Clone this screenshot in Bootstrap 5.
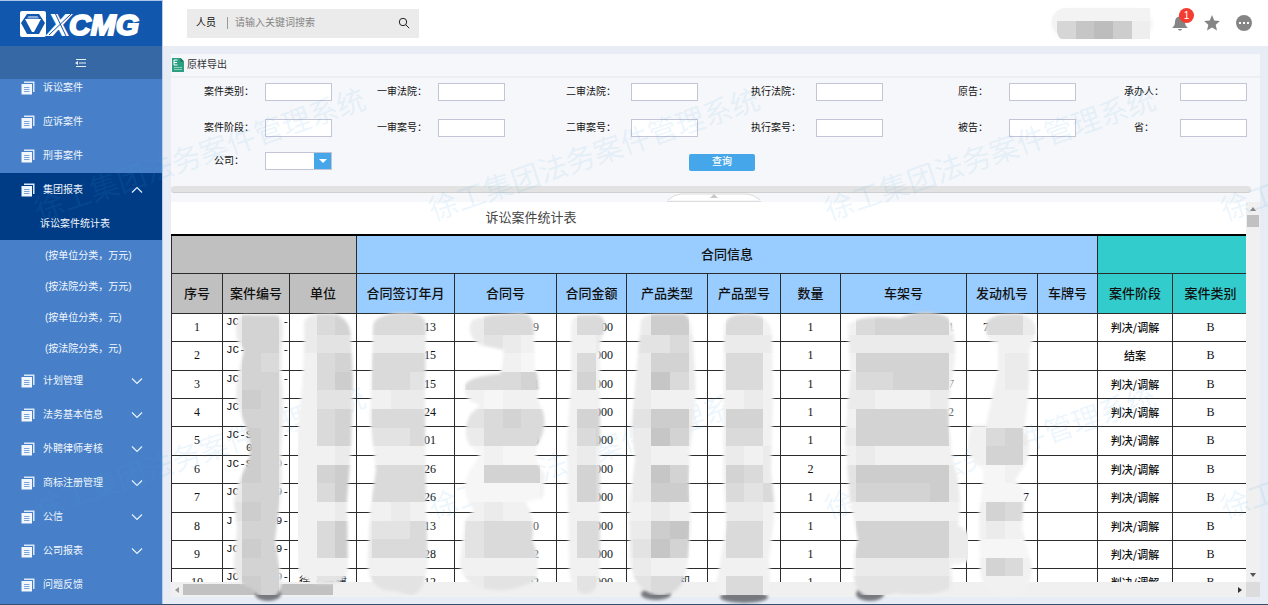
<!DOCTYPE html>
<html lang="zh-CN">
<head>
<meta charset="utf-8">
<meta name="viewport" content="width=device-width, initial-scale=1">
<title>法务案件管理系统</title>
<link href="https://cdn.jsdelivr.net/npm/bootstrap@5.3.0/dist/css/bootstrap.min.css" rel="stylesheet">
<style>
body{font-family:"Liberation Sans","Noto Sans CJK SC",sans-serif;font-size:10px;line-height:16px;color:#111;background:#e7ecf5}
.app{height:100vh;border-bottom:1px solid #33506e}
.side{width:162px;background:#4780c8;border-top:1px solid #a9c5e8}
.side a{color:#f2f7fd;text-decoration:none}
.logo{height:45px;background:#1257ae;padding-left:19px}
.fold{height:33px;background:#3568a5;border:0;padding:0}
.menu-list{margin-top:-8px}
.item{height:34px;padding:0 19px 0 21px}
.item svg:first-child{margin-right:8px}
.opened{background:#003c85}
.sub{height:31px;padding-left:45px}
.sub-on{height:33px;padding-left:40px;background:#003c85}
.content{border-left:1px solid #b7cdea}
.top{height:46px;background:#fff;padding:0 16px 0 24px}
.search{width:232px;height:29px;background:#ebebeb;padding:0 9px}
.search input{border:0;background:none;outline:0;padding:0;color:#777;min-width:0}
.search input::placeholder{color:#858585}
.search .bar{width:1px;height:12px;background:#999;margin:0 7px 0 11px}
.icon-btn{border:0;background:none;padding:0;line-height:0}
.num{width:15px;height:15px;left:7px;top:-7px;background:#f43c30;color:#fff;border-radius:50%;font-size:10px;line-height:15px;text-align:center}
.panel{background:#f6f7fa;margin:8px 8px 7px 8px;min-height:0}
.export{height:24px;border:0;border-bottom:2px solid #eceef1;background:none;padding:0 1px;color:#333}
.export span{margin-left:3px}
.query{display:grid;grid-template-columns:161fr 173fr 193fr 185fr 193fr 171fr;grid-template-rows:28px 44px 22px;padding:0 13px 14px 0}
.field label{width:72px;text-align:center}
.wide label{width:80px}
.field input,.pick{width:67px;height:18px;border:1px solid #c3c4d6;background:#fff;padding:0;border-radius:0}
.pick{appearance:none;background:linear-gradient(#45a6ea,#45a6ea) right/17px 100% no-repeat #fff}
.combo::after{content:"";position:absolute;right:5px;top:7px;border:4px solid transparent;border-top-color:#fff;border-bottom:0}
.go{width:66px;height:17px;background:#45a6ea;border:0;color:#fff;font-size:10px;font-weight:500;line-height:16px;padding:0;border-radius:2px}
.go-cell{grid-column:3/5;padding-left:56px;padding-top:2px}
.splitter{height:7px;margin-right:9px;background:#e2e2e2;border-bottom:1px solid #cfcfcf;border-radius:4px}
.handle{height:9px}
.report{background:#fff}
.sheet-title{height:32px;width:67%;font-size:13px;color:#444;line-height:32px;text-align:center}
.ledger{table-layout:fixed;width:100%;min-width:1078px;border-collapse:collapse;font:12px/15px "Liberation Serif","Noto Sans CJK SC",serif;color:#111}
.ledger th,.ledger td{border:1px solid #2b2b2b;padding:0;text-align:center;overflow:hidden}
.ledger th{font-size:13px;font-weight:500}
.ledger .g1 th{height:38px;border-top:2px solid #000}
.ledger .g2 th{height:40px}
.ledger tbody tr{height:28px}
.ledger tbody tr:nth-child(5n+2),.ledger tbody tr:nth-child(5n+5){height:29px}
.gray{background:#c0c0c0}.blue{background:#9cf}.teal{background:#3cc}
.ledger td.code{font:11px/13px "Liberation Mono",monospace;vertical-align:top;padding:2px 0 0 3px}
.ledger td.day{text-align:right;padding-right:18px}
.ledger td.no{text-align:right;padding-right:17px;color:#555}
.ledger td.sum{text-align:right;padding-right:13px}
.ledger td.vin{text-align:right;padding-right:12px;color:#666}
.ledger td.stage{font-family:"Noto Sans CJK SC",sans-serif;font-size:11px;font-weight:500}
.vbar{width:14px;background:#f0f0f0;padding:5px 1px}
.hbar{height:15px;background:#f0f0f0}
.arr{border:3px solid transparent;width:0;height:0}
.up{border-bottom:4px solid #888;border-top:0}
.down{border-top:4px solid #555;border-bottom:0}
.lft{border-right:4px solid #999;border-left:0}
.rgt{border-left:4px solid #333;border-right:0}
.vthumb{width:12px;height:12px;background:#c1c1c1}
.hthumb{width:150px;height:11px;background:#c1c1c1}
.corner{width:14px;background:#dcdcdc}
.mosaic{left:0;top:0;z-index:3;pointer-events:none;overflow:visible}
.stamp{inset:0;z-index:2;pointer-events:none}
</style>
</head>
<body class="overflow-hidden">
<svg class="d-none" aria-hidden="true">
  <symbol id="doc" viewBox="0 0 14 14"><path d="M3 .500h10.500V11H12V2H3z" fill="#dce8f7"/><path d="M.500 3h10.500v10.500H.500z" fill="#f2f7fd"/><path d="M3 6.500h5.500M3 8.500h5.500M3 10.500h5.500" stroke="#6d9ad6" stroke-width=".9"/></symbol>
  <symbol id="dn" viewBox="0 0 12 8"><path d="M1 1.500l5 5 5-5" fill="none" stroke="#e8f1fb" stroke-width="1.200"/></symbol>
  <symbol id="upw" viewBox="0 0 12 8"><path d="M1 6.500l5-5 5 5" fill="none" stroke="#e8f1fb" stroke-width="1.200"/></symbol>
</svg>
<div class="app d-flex position-relative">
  <aside class="side d-flex flex-column flex-shrink-0 overflow-hidden">
    <div class="logo flex-shrink-0">
      <svg width="132" height="44" viewBox="0 0 132 44" aria-label="XCMG">
        <rect x="1" y="10" width="26" height="26" rx="2" fill="#fff"/>
        <path d="M8 13h12l6 9-6 11H8L2 22z" fill="#1257ae"/>
        <path d="M9.500 15h9l1.500 2.500H8z" fill="#fff" opacity=".5"/>
        <path d="M6 18h16l-7 13h-2z" fill="#fff"/>
        <text x="30" y="34" font-family="Liberation Sans,sans-serif" font-size="30" font-weight="700" font-style="italic" fill="#fff" stroke="#fff" stroke-width="2">XCMG</text>
        <path d="M36 12l11 23M30 34l22-21" stroke="#1257ae" stroke-width="1"/>
      </svg>
    </div>
    <button class="fold flex-shrink-0" aria-label="收起菜单"><svg width="12" height="10" viewBox="0 0 12 10"><path d="M1 1.500h10M4 5h7M1 8.500h10" stroke="#e4edf8" stroke-width="1.200"/><path d="M0 5l3-2v4z" fill="#e4edf8"/></svg></button>
    <nav class="overflow-hidden flex-grow-1">
      <div class="menu-list">
        <a href="#" class="item d-flex align-items-center"><svg width="14" height="14"><use href="#doc"/></svg><span>诉讼案件</span></a>
        <a href="#" class="item d-flex align-items-center"><svg width="14" height="14"><use href="#doc"/></svg><span>应诉案件</span></a>
        <a href="#" class="item d-flex align-items-center"><svg width="14" height="14"><use href="#doc"/></svg><span>刑事案件</span></a>
        <a href="#" class="item opened d-flex align-items-center"><svg width="14" height="14"><use href="#doc"/></svg><span>集团报表</span><svg class="ms-auto" width="12" height="8"><use href="#upw"/></svg></a>
        <a href="#" class="sub-on d-flex align-items-center">诉讼案件统计表</a>
        <a href="#" class="sub d-flex align-items-center">(按单位分类，万元)</a>
        <a href="#" class="sub d-flex align-items-center">(按法院分类，万元)</a>
        <a href="#" class="sub d-flex align-items-center">(按单位分类，元)</a>
        <a href="#" class="sub d-flex align-items-center">(按法院分类，元)</a>
        <a href="#" class="item d-flex align-items-center"><svg width="14" height="14"><use href="#doc"/></svg><span>计划管理</span><svg class="ms-auto" width="12" height="8"><use href="#dn"/></svg></a>
        <a href="#" class="item d-flex align-items-center"><svg width="14" height="14"><use href="#doc"/></svg><span>法务基本信息</span><svg class="ms-auto" width="12" height="8"><use href="#dn"/></svg></a>
        <a href="#" class="item d-flex align-items-center"><svg width="14" height="14"><use href="#doc"/></svg><span>外聘律师考核</span><svg class="ms-auto" width="12" height="8"><use href="#dn"/></svg></a>
        <a href="#" class="item d-flex align-items-center"><svg width="14" height="14"><use href="#doc"/></svg><span>商标注册管理</span><svg class="ms-auto" width="12" height="8"><use href="#dn"/></svg></a>
        <a href="#" class="item d-flex align-items-center"><svg width="14" height="14"><use href="#doc"/></svg><span>公信</span><svg class="ms-auto" width="12" height="8"><use href="#dn"/></svg></a>
        <a href="#" class="item d-flex align-items-center"><svg width="14" height="14"><use href="#doc"/></svg><span>公司报表</span><svg class="ms-auto" width="12" height="8"><use href="#dn"/></svg></a>
        <a href="#" class="item d-flex align-items-center"><svg width="14" height="14"><use href="#doc"/></svg><span>问题反馈</span></a>
      </div>
    </nav>
  </aside>

  <div class="content d-flex flex-column flex-grow-1 overflow-hidden">
    <header class="top d-flex align-items-center flex-shrink-0">
      <form class="search d-flex align-items-center">
        <label for="kw">人员</label><span class="bar"></span>
        <input id="kw" class="flex-grow-1" type="text" placeholder="请输入关键词搜索">
        <button class="icon-btn" type="button" aria-label="搜索"><svg width="12" height="12" viewBox="0 0 12 12" fill="none" stroke="#222"><circle cx="5" cy="5" r="3.700"/><path d="M7.800 7.800l3.400 3.400"/></svg></button>
      </form>
      <div class="d-flex align-items-center ms-auto">
        <svg class="me-3" width="108" height="38" viewBox="0 0 108 38" aria-hidden="true">
          <defs><filter id="haze"><feGaussianBlur stdDeviation="2"/></filter></defs>
          <rect x="4" y="6" width="100" height="27" rx="14" fill="#f3f3f3" filter="url(#haze)"/>
          <path d="M18 4h84v28H18a13 13 0 0 1 0-28z" fill="#f3f3f3"/>
          <path d="M9 17h19v18H14c-3 0-5-5-5-9z" fill="#d6d6d6"/><path d="M28 17h18v18H28z" fill="#c6c6c6"/><path d="M46 17h19v18H46z" fill="#bdbdbd"/><path d="M65 17h19v18H65z" fill="#cdcdcd"/><path d="M84 17h18v18H84z" fill="#eee"/>
        </svg>
        <button class="icon-btn position-relative me-3" aria-label="通知"><svg width="16" height="16" viewBox="0 0 16 16" fill="#858585"><path d="M8 0c1 0 1 1 1 1.500 3 .5 4 3 4 5.500 0 3 1 4 2.500 5.500v.5H.500v-.5C2 11 3 10 3 7c0-2.500 1-5 4-5.500C7 1 7 0 8 0zM6 14h4c-.5 2-3.500 2-4 0z"/></svg><span class="num position-absolute">1</span></button>
        <button class="icon-btn me-3" aria-label="收藏"><svg width="16" height="16" viewBox="0 0 16 16" fill="#858585"><path d="M8 0l2.300 5.400 5.700.5-4.300 3.800 1.300 5.800L8 12.400l-5 3.100 1.300-5.800L0 5.900l5.700-.5z"/></svg></button>
        <button class="icon-btn" aria-label="更多"><svg width="16" height="16" viewBox="0 0 16 16"><circle cx="8" cy="8" r="8" fill="#858585"/><path d="M3 7h2v2H3zM7 7h2v2H7zM11 7h2v2h-2z" fill="#fff"/></svg></button>
      </div>
    </header>

    <main class="panel d-flex flex-column flex-grow-1">
      <button class="export d-flex align-items-center flex-shrink-0 text-start"><svg width="12" height="14" viewBox="0 0 12 14"><path d="M0 0h8.500L12 3.500V14H0z" fill="#2b9f80"/><path d="M8.500 0v3.500H12z" fill="#176b55"/><path d="M5.500 2H2v5h3.500M2 4.500h3" fill="none" stroke="#fff"/><path d="M2 9.500h8M2 11.500h8" stroke="#8fd0bd"/></svg><span>原样导出</span></button>
      <form class="query flex-shrink-0">
        <div class="field d-flex justify-content-end align-items-center"><label for="f1">案件类别：</label><input id="f1"></div>
        <div class="field d-flex justify-content-end align-items-center"><label for="f2">一审法院：</label><input id="f2"></div>
        <div class="field wide d-flex justify-content-end align-items-center"><label for="f3">二审法院：</label><input id="f3"></div>
        <div class="field wide d-flex justify-content-end align-items-center"><label for="f4">执行法院：</label><input id="f4"></div>
        <div class="field d-flex justify-content-end align-items-center"><label for="f5">原告：</label><input id="f5"></div>
        <div class="field d-flex justify-content-end align-items-center"><label for="f6">承办人：</label><input id="f6"></div>
        <div class="field d-flex justify-content-end align-items-center"><label for="f7">案件阶段：</label><input id="f7"></div>
        <div class="field d-flex justify-content-end align-items-center"><label for="f8">一审案号：</label><input id="f8"></div>
        <div class="field wide d-flex justify-content-end align-items-center"><label for="f9">二审案号：</label><input id="f9"></div>
        <div class="field wide d-flex justify-content-end align-items-center"><label for="f10">执行案号：</label><input id="f10"></div>
        <div class="field d-flex justify-content-end align-items-center"><label for="f11">被告：</label><input id="f11"></div>
        <div class="field d-flex justify-content-end align-items-center"><label for="f12">省：</label><input id="f12"></div>
        <div class="field d-flex justify-content-end align-items-center"><label for="f13">公司：</label><span class="combo position-relative d-flex"><select id="f13" class="pick"><option></option></select></span></div>
        <div class="go-cell d-flex justify-content-center align-items-center"><button class="go" type="button">查询</button></div>
      </form>
      <div class="splitter flex-shrink-0"></div>
      <div class="handle flex-shrink-0 d-flex justify-content-center pe-1"><svg width="94" height="9" viewBox="0 0 94 9"><path d="M1 7Q8 1 14 1h66q6 0 13 6" fill="#fff" stroke="#dcdcdc"/><path d="M0 8.500h94" stroke="#dcdcdc"/><path d="M43 5l4-4 4 4z" fill="#c9c9c9"/></svg></div>
      <section class="report position-relative d-flex flex-column flex-grow-1">
        <div class="d-flex flex-grow-1 overflow-hidden" style="min-height:0;flex-basis:0">
          <div class="flex-grow-1 overflow-hidden">
            <div class="sheet-title">诉讼案件统计表</div>
            <table class="ledger">
              <colgroup><col style="width:51px"><col style="width:67px"><col style="width:67px"><col style="width:98px"><col style="width:102px"><col style="width:70px"><col style="width:81px"><col style="width:73px"><col style="width:60px"><col style="width:126px"><col style="width:71px"><col style="width:60px"><col style="width:75px"><col></colgroup>
              <thead>
                <tr class="g1"><th class="gray" colspan="3"></th><th class="blue" colspan="9">合同信息</th><th class="teal" colspan="2"></th></tr>
                <tr class="g2"><th class="gray">序号</th><th class="gray">案件编号</th><th class="gray">单位</th><th class="blue">合同签订年月</th><th class="blue">合同号</th><th class="blue">合同金额</th><th class="blue">产品类型</th><th class="blue">产品型号</th><th class="blue">数量</th><th class="blue">车架号</th><th class="blue">发动机号</th><th class="blue">车牌号</th><th class="teal">案件阶段</th><th class="teal">案件类别</th></tr>
              </thead>
              <tbody>
                <tr><td>1</td><td class="code"><div class="d-flex justify-content-between"><span>JC</span><span>-</span></div></td><td></td><td class="day">13</td><td class="no">9</td><td class="sum">000</td><td></td><td></td><td>1</td><td class="vin">1</td><td class="text-start ps-3">7</td><td></td><td class="stage">判决/调解</td><td>B</td></tr>
                <tr><td>2</td><td class="code"><div class="d-flex justify-content-between"><span>JC-</span><span>-</span></div></td><td></td><td class="day">15</td><td class="no"></td><td class="sum">000</td><td></td><td></td><td>1</td><td class="vin"></td><td></td><td></td><td class="stage">结案</td><td>B</td></tr>
                <tr><td>3</td><td class="code"><div class="d-flex justify-content-between"><span>JC</span><span>-</span></div></td><td></td><td class="day">15</td><td class="no">01</td><td class="sum">000</td><td></td><td></td><td>1</td><td class="vin">27</td><td></td><td></td><td class="stage">判决/调解</td><td>B</td></tr>
                <tr><td>4</td><td class="code"><div class="d-flex justify-content-between"><span>JC</span><span>-</span></div></td><td></td><td class="day">24</td><td class="no">7</td><td class="sum">000</td><td></td><td></td><td>1</td><td class="vin">2</td><td></td><td></td><td class="stage">判决/调解</td><td>B</td></tr>
                <tr><td>5</td><td class="code"><div class="d-flex justify-content-between"><span>JC-S</span><span>-</span></div><div class="text-start ps-3 ms-1">0</div></td><td></td><td class="day">01</td><td class="no">20</td><td class="sum">000</td><td></td><td></td><td>1</td><td class="vin"></td><td></td><td></td><td class="stage">判决/调解</td><td>B</td></tr>
                <tr><td>6</td><td class="code"><div class="d-flex justify-content-between"><span>JC-S</span><span>9-</span></div></td><td></td><td class="day">26</td><td class="no"></td><td class="sum">000</td><td></td><td></td><td>2</td><td class="vin"></td><td></td><td></td><td class="stage">判决/调解</td><td>B</td></tr>
                <tr><td>7</td><td class="code"><div class="d-flex justify-content-between"><span>JC</span><span>9-</span></div></td><td></td><td class="day">26</td><td class="no"></td><td class="sum">000</td><td></td><td></td><td>1</td><td class="vin"></td><td class="text-end pe-2">7</td><td></td><td class="stage">判决/调解</td><td>B</td></tr>
                <tr><td>8</td><td class="code"><div class="d-flex justify-content-between"><span>J</span><span>9-</span></div></td><td></td><td class="day">13</td><td class="no">0</td><td class="sum">000</td><td></td><td></td><td>1</td><td class="vin"></td><td></td><td></td><td class="stage">判决/调解</td><td>B</td></tr>
                <tr><td>9</td><td class="code"><div class="d-flex justify-content-between"><span>JC</span><span>19-</span></div></td><td></td><td class="day">28</td><td class="no">2</td><td class="sum">000</td><td></td><td></td><td>1</td><td class="vin"></td><td></td><td></td><td class="stage">判决/调解</td><td>B</td></tr>
                <tr><td>10</td><td class="code"><div class="d-flex justify-content-between"><span>JC</span><span>9-</span></div></td><td>徐工集建</td><td class="day">12</td><td class="no">02</td><td class="sum">000</td><td class="text-end pe-3">机</td><td></td><td>1</td><td class="vin"></td><td></td><td></td><td class="stage">判决/调解</td><td>B</td></tr>
              </tbody>
            </table>
          </div>
          <div class="vbar d-flex flex-column align-items-center flex-shrink-0"><span class="arr up mb-1"></span><span class="vthumb"></span><span class="arr down mt-auto"></span></div>
        </div>
        <div class="hbar d-flex align-items-center flex-shrink-0"><span class="arr lft ms-1 me-1"></span><span class="hthumb"></span><span class="arr rgt ms-auto me-1"></span><span class="corner align-self-stretch"></span></div>
        <svg class="mosaic position-absolute w-100 h-100" aria-hidden="true"><defs><filter id="soft" x="-20%" width="140%"><feGaussianBlur stdDeviation="1.600"/></filter></defs><g id="blots" transform="translate(-171 -202)"></g></svg>
      </section>
    </main>
  </div>

  <svg class="stamp position-absolute w-100 h-100" aria-hidden="true">
    <g font-family="Noto Sans CJK SC,sans-serif" font-weight="400" font-size="29" fill="#3fa4e0" fill-opacity=".11">
      <text transform="translate(39 221) rotate(-19)">徐工集团法务案件管理系统</text>
      <text transform="translate(433 221) rotate(-19)">徐工集团法务案件管理系统</text>
      <text transform="translate(829 221) rotate(-19)">徐工集团法务案件管理系统</text>
      <text transform="translate(1225 221) rotate(-19)">徐工集团法务案件管理系统</text>
      <text transform="translate(39 519) rotate(-19)">徐工集团法务案件管理系统</text>
      <text transform="translate(433 519) rotate(-19)">徐工集团法务案件管理系统</text>
      <text transform="translate(829 519) rotate(-19)">徐工集团法务案件管理系统</text>
      <text transform="translate(1225 519) rotate(-19)">徐工集团法务案件管理系统</text>
    </g>
  </svg>
</div>
<script src="https://cdn.jsdelivr.net/npm/bootstrap@5.3.0/dist/js/bootstrap.bundle.min.js"></script>
<script>
// Redaction strokes: k = first mosaic column, rows = one letter per tile (a dark … h light), path = brush outline
const tone = {a:'#c6c6c6', b:'#cdcdcd', c:'#d3d3d3', d:'#dadada', e:'#e3e3e3', f:'#ebebeb', g:'#f1f1f1', h:'#f6f6f6'};
const strokes = [
  {k:3, rows:'fccf fccf fcdf fccf fbcf fccf fbcf fbcf ebcf fccf ebcf fccf fbcf fccf fbcf ebbf',
   path:'M237 320Q240 313 252 315H276Q284 318 283 330L281 372Q284 395 283 420L281 450Q284 480 279 510L275 540Q279 565 282 580Q281 597 268 599Q256 597 252 588Q232 584 234 560L237 530L234 500Q238 480 248 462Q254 445 243 420L236 400Q236 375 244 350Q233 340 237 320Z'},
  {k:7, rows:'fdcd feee gdcd gdbd geef gdce gdce ggfg gcbd gdbd ggfg gdbd gdbd gggg geef',
   path:'M304 322Q308 313 325 314Q348 312 351 335L353 380L351 450L347 500L348 570Q346 584 326 584Q305 584 298 570L295 530L297 440L302 385Q305 340 304 322Z'},
  {k:10, rows:'fdddf gfffg fdddf fddef ggffg fdddf feedf ggggg fdddf fdddf ggfgg feedf fdddf ggggg feeef',
   path:'M373 325Q375 316 395 313Q425 310 426 325L425 400L426 500L428 560Q426 590 412 596Q395 590 385 590Q366 585 368 560L370 510L376 470L370 420Z'},
  {k:15, rows:'gfdddg gfefgg hhhghh gdddcd gghggh gedcdd gfdddd hhghhh hhcccg hhhhhg ggfggg geddde geddde gggggg gfeeeg',
   path:'M472 320Q490 314 520 313Q534 313 534 330L535 368Q540 378 538 400Q550 420 540 440Q530 455 545 475L543 498L525 502Q536 515 532 540Q542 560 536 580Q510 595 482 588Q458 580 460 560L465 520L474 510Q458 490 470 470L480 455Q458 440 470 415L480 405Q462 400 465 385Q470 376 500 374L504 350L480 345Q465 335 472 320Z'},
  {k:21, rows:'gddf ggfg gdgg gcgg gggg gccg gdcg gfgg gcdg gcdg gggg gddg gddg gggg gefg',
   path:'M571 324Q572 313 590 315Q608 312 604 332L600 345V575Q598 594 584 594Q569 590 569 565L567 440L571 380Z'},
  {k:24, rows:'gfbbg feedf gfccf gfadf gfggg febbf gfacf gfggg gfacg gfbbg ggfgg ffbaf feacf gfggg feddf',
   path:'M641 320Q646 313 660 314H684Q692 317 693 340L696 395L690 450L689 480L691 520L688 560Q686 594 660 596Q635 592 630 565L629 500L635 460L631 430Z'},
  {k:29, rows:'gddg ffff gddg gddg ggfg gccg gddg gfgf gcdf gded gffg gddg gddg gggg gddg',
   path:'M724 325Q728 313 748 314Q770 314 772 335L773 400L771 470L775 510L769 560Q772 586 767 599H723Q712 590 718 575L726 525L723 470Z'},
  {k:35, rows:'ggdccccg gfffffff ggcccccg gfddcccg gffgggff ggcccccf gfcccccf ggfggggg gebbbbbf geccccbf gggggggg gfcccccf gfcccccf ggfffffg geeeeeef',
   path:'M848 325Q858 314 900 318Q925 307 947 317Q956 325 955 360L949 400Q947 440 958 480Q962 510 958 525Q976 535 974 555Q967 565 952 565V588Q930 598 895 593Q870 605 858 590Q848 570 858 540L850 500L845 440L850 375Z'},
  {k:43, rows:'fddf gggg fgff fgff hggg gggg gdcf gccg hhgg hhhg gcdd gfgf hhhh gcdg gggg gffg',
   path:'M986 323Q992 314 1010 314Q1035 312 1036 332L1029 352Q1030 375 1028 400L1024 430Q1035 450 1023 468L1015 480L1024 490L1022 530L1032 565Q1032 596 1008 596Q982 594 980 570L979 515L984 470Q960 455 972 425L986 425L998 370V343Q984 342 986 323Z'}
];
const W = 18.6, parts = ['<g filter="url(#soft)" fill="#77797f"><ellipse cx="268" cy="594" rx="13" ry="7"/><ellipse cx="656" cy="594" rx="15" ry="6"/><ellipse cx="744" cy="597" rx="24" ry="6"/><ellipse cx="870" cy="594" rx="14" ry="7"/></g>'];
strokes.forEach((s, i) => {
  parts.push(`<mask id="m${i}" maskUnits="userSpaceOnUse" x="160" y="290" width="900" height="305"><path d="${s.path}" fill="#fff" filter="url(#soft)"/></mask><g mask="url(#m${i})" shape-rendering="crispEdges">`);
  s.rows.split(' ').forEach((row, j) => [...row].forEach((c, n) => {
    const top = j ? 316 + j * W : 308;
    parts.push(`<rect x="${(167.7 + (s.k + n) * W).toFixed(1)}" y="${top.toFixed(1)}" width="19.200" height="${j ? 19.2 : 27}" fill="${tone[c]}"/>`);
  }));
  parts.push('</g>');
});
document.getElementById('blots').innerHTML = parts.join('');
</script>
</body>
</html>
